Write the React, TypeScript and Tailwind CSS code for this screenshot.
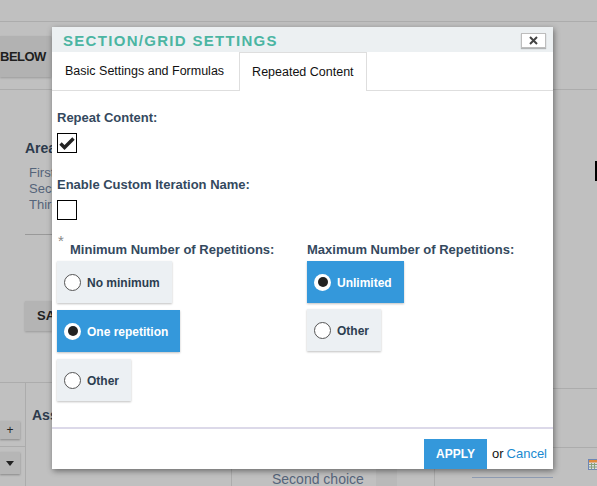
import React from 'react'

function Radio({ label, checked }: { label: string; checked?: boolean }) {
  return (
    <div
      className={
        'flex items-center h-[42px] pl-[7px] pr-[12px] gap-[6px] whitespace-nowrap shadow-[0_1px_2px_rgba(0,0,0,0.25)] ' +
        (checked ? 'bg-[#3498db] text-white' : 'bg-[#ecf0f3] text-[#2c3e50]')
      }
    >
      {checked ? (
        <span className="w-[17px] h-[17px] shrink-0 rounded-full bg-white flex items-center justify-center">
          <span className="w-[10px] h-[10px] rounded-full bg-[#222]" />
        </span>
      ) : (
        <span className="w-[17px] h-[17px] shrink-0 rounded-full bg-white border border-[#555]" />
      )}
      <span className="text-[12px] font-bold pt-[2px]">{label}</span>
    </div>
  )
}

function CheckBox({ checked }: { checked?: boolean }) {
  return (
    <div className="w-[20px] h-[20px] border border-black bg-white flex items-center justify-center">
      {checked && (
        <svg width="16" height="14" viewBox="0 0 16 14">
          <path d="M1.5 7.5 L5.5 11.5 L14.5 2.5" fill="none" stroke="#222" strokeWidth="3.4" />
        </svg>
      )}
    </div>
  )
}

export default function App() {
  return (
    <div className="relative w-[597px] h-[486px] overflow-hidden bg-[#c0c0c0] font-['Liberation_Sans',Arial,sans-serif]">
      {/* page behind the overlay */}
      <div className="h-[22px] border-b border-[#acacac]" />
      <div className="h-[68px] border-b border-[#acacac] pt-[14px]">
        <div className="w-[51px] h-[41px] bg-[#b2b2b2] shadow-[0_1px_2px_rgba(0,0,0,0.2)] flex items-center text-[13px] font-bold text-[#1e1e1e] tracking-[-0.5px]">
          BELOW
        </div>
      </div>
      <div className="flex">
        <div className="w-[52px] shrink-0 overflow-hidden">
          <div className="pl-[25px] pt-[50px] text-[14px] font-bold text-[#2c3a4c] leading-[16px]">Area</div>
          <div className="pl-[29px] pt-[9px] text-[13px] text-[#55647a] leading-[16px] whitespace-nowrap">
            <div>First</div>
            <div>Second</div>
            <div>Third</div>
          </div>
          <div className="ml-[25px] mt-[21px] border-b border-[#999]" />
          <div className="ml-[25px] mt-[66px] h-[30px] bg-[#b4b4b4] shadow-[0_1px_2px_rgba(0,0,0,0.2)] flex items-center pl-[12px] text-[13px] font-bold text-[#222] whitespace-nowrap">
            SAVE
          </div>
          <div className="mt-[51px] border-t border-[#acacac] flex">
            <div className="w-[26px] shrink-0 border-r border-[#acacac] h-[104px] flex flex-col">
              <div className="h-[64px] border-b border-[#acacac] flex items-end pb-[7px]">
                <div className="w-[20px] h-[18px] bg-[#b6b6b6] shadow-[0_1px_2px_rgba(0,0,0,0.3)] flex items-center justify-center text-[12px] text-[#222]">
                  +
                </div>
              </div>
              <div className="pt-[5px]">
                <div className="w-[20px] h-[22px] bg-[#b6b6b6] shadow-[0_1px_2px_rgba(0,0,0,0.3)] flex items-center justify-center">
                  <svg width="8" height="5" viewBox="0 0 8 5">
                    <path d="M0 0 L8 0 L4 5 Z" fill="#222" />
                  </svg>
                </div>
              </div>
            </div>
            <div className="pl-[6px] pt-[22px] text-[14px] font-bold text-[#2c3a4c] whitespace-nowrap">Ass</div>
          </div>
        </div>
        <div className="flex-1 flex flex-col">
          <div className="h-[377px]" />
          <div className="flex h-[20px]">
            <div className="w-[180px] border-r border-[#acacac]" />
            <div className="w-[144px] pl-[40px] text-[14px] leading-[16px] text-[#55647a] whitespace-nowrap overflow-hidden">
              <div className="-mt-[14px]">First choice</div>
              <div className="mt-[2px]">Second choice</div>
            </div>
            <div className="w-[21px] bg-[#b9b9b9]" />
            <div className="w-[38px] border-r border-[#acacac]" />
            <div className="flex-1 pt-[10px] pl-[37px]">
              <div className="border-t border-[#8f9cb2]" />
            </div>
          </div>
        </div>
        <div className="w-[44px] shrink-0 flex flex-col items-end">
          <div className="h-[71px]" />
          <div className="w-[2px] h-[20px] bg-black" />
          <div className="h-[207px]" />
          <div className="w-full border-t border-[#acacac] h-[59px]" />
          <div className="w-full border-t border-[#acacac] pt-[11px] flex justify-end">
            <svg width="9" height="11" viewBox="0 0 9 11">
              <rect x="0.5" y="0.5" width="10" height="10" fill="#d8dde6" stroke="#6d86b5" />
              <rect x="1" y="1" width="9" height="2.5" fill="#e08a3c" />
              <path d="M1 5.5 H9 M1 8 H9 M3.5 4 V10.5 M6.5 4 V10.5" stroke="#8aa07a" strokeWidth="1" />
            </svg>
          </div>
        </div>
      </div>

      {/* modal */}
      <div className="absolute left-[52px] top-[27px] w-[501px] h-[442px] bg-white shadow-[1px_2px_6px_rgba(0,0,0,0.45)] flex flex-col">
        <div className="h-[25px] bg-[#ecf0f2] flex items-center justify-between pl-[11px] pr-[7px]">
          <span className="text-[15px] font-bold text-[#4bb5a2] tracking-[1.3px] leading-none pt-[1px]">
            SECTION/GRID SETTINGS
          </span>
          <div className="w-[25px] h-[15px] mt-[2px] bg-white border border-[#bdbdbd] shadow-[0_1px_1px_rgba(0,0,0,0.25)] flex items-center justify-center">
            <svg width="9" height="9" viewBox="0 0 9 9">
              <path d="M1 1 L8 8 M8 1 L1 8" stroke="#444" strokeWidth="2" />
            </svg>
          </div>
        </div>
        <div className="flex h-[39px] border-b border-[#dedede] text-[12.5px] text-[#111]">
          <div className="pl-[13px] pr-[15px] flex items-center">Basic Settings and Formulas</div>
          <div className="px-[12px] flex items-center border border-b-0 border-[#dedede] bg-white -mb-[1px] h-[39px]">
            Repeated Content
          </div>
        </div>
        <div className="flex-1 pl-[5px] pt-[19px] text-[#34495e]">
          <div className="text-[13px] font-bold leading-[16px]">Repeat Content:</div>
          <div className="mt-[7px]">
            <CheckBox checked />
          </div>
          <div className="mt-[24px] text-[13px] font-bold leading-[16px]">Enable Custom Iteration Name:</div>
          <div className="mt-[7px]">
            <CheckBox />
          </div>
          <div className="flex mt-[13px]">
            <div className="w-[250px]">
              <div className="text-[#8a8a8a] text-[15px] leading-[9px] pl-[1px] h-[9px] pt-[3px]">*</div>
              <div className="pl-[13px] text-[13px] font-bold leading-[16px]">Minimum Number of Repetitions:</div>
              <div className="flex flex-col items-start gap-[7px] mt-[3px]">
                <Radio label="No minimum" />
                <Radio label="One repetition" checked />
                <Radio label="Other" />
              </div>
            </div>
            <div className="pt-[9px]">
              <div className="text-[13px] font-bold leading-[16px]">Maximum Number of Repetitions:</div>
              <div className="flex flex-col items-start gap-[6px] mt-[3px]">
                <Radio label="Unlimited" checked />
                <Radio label="Other" />
              </div>
            </div>
          </div>
        </div>
        <div className="border-t-2 border-[#dcd9e9] pt-[10px] pr-[6px] flex justify-end items-end">
          <div className="w-[63px] h-[30px] bg-[#3498db] text-white text-[12px] font-bold flex items-center justify-center">
            APPLY
          </div>
          <div className="h-[30px] flex items-center text-[13px] pl-[5px]">
            <span className="text-[#111]">or</span>
            <span className="text-[#1a8ad0] ml-[3px]">Cancel</span>
          </div>
        </div>
      </div>
    </div>
  )
}
